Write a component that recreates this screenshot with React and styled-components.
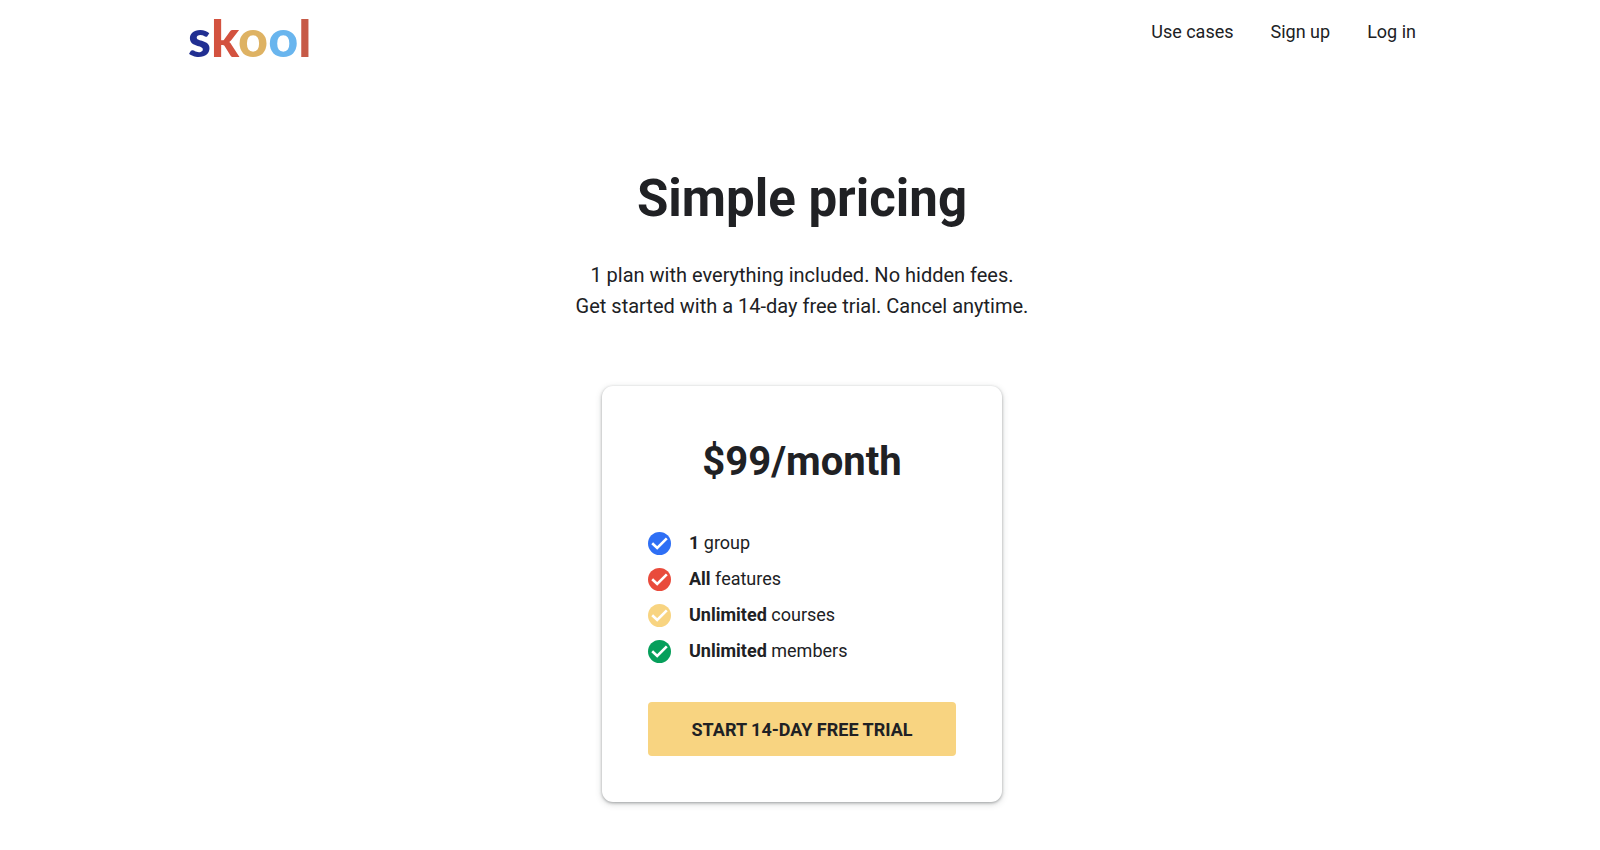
import React from "react";
import styled, { createGlobalStyle } from "styled-components";

const GlobalStyle = createGlobalStyle`
	* {
		box-sizing: border-box;
	}

	body {
		margin: 0;
		background-color: #fff;
		color: #202124;
		font-family: "Roboto", "Liberation Sans", sans-serif;
	}
`;

const Page = styled.div`
	padding: 0 20px 48px 24px;
`;

const Header = styled.header`
	display: flex;
	align-items: flex-start;
	justify-content: space-between;
	max-width: 1228px;
	margin: 0 auto;
	padding-top: 5px;
`;

const Logo = styled.a`
	font-family: "Lato", sans-serif;
	font-size: 52px;
	font-weight: 900;
	line-height: 64px;
	text-decoration: none;
`;

const Letter = styled.span`
	color: ${(props) => props.$color};
`;

const Nav = styled.nav`
	display: flex;
	gap: 37px;
	padding-top: 15px;
`;

const NavLink = styled.a`
	color: #202124;
	font-size: 18px;
	line-height: 24px;
	text-decoration: none;
`;

const Main = styled.main`
	display: flex;
	flex-direction: column;
	align-items: center;
	padding-top: 98px;
	text-align: center;
`;

const Title = styled.h1`
	margin: 0;
	font-size: 51px;
	font-weight: 700;
	line-height: 64px;
`;

const Intro = styled.p`
	margin: 29px 0 0;
	font-size: 20px;
	line-height: 31px;
`;

const Card = styled.section`
	width: 100%;
	max-width: 400px;
	margin-top: 64px;
	padding: 46px;
	border-radius: 11px;
	background-color: #fff;
	box-shadow: 0 1px 3px rgba(60, 64, 67, 0.4), 0 2px 7px rgba(60, 64, 67, 0.2);
`;

const Price = styled.h2`
	margin: 0;
	font-size: 40px;
	font-weight: 700;
	line-height: 60px;
`;

const FeatureList = styled.ul`
	display: flex;
	flex-direction: column;
	gap: 12px;
	margin: 39px 0;
	padding: 0;
	list-style: none;
`;

const Feature = styled.li`
	display: flex;
	align-items: center;
	gap: 18px;
	font-size: 18px;
	line-height: 24px;
`;

const CheckIcon = styled.svg`
	flex: none;
	width: 23px;
	height: 23px;
`;

const TrialButton = styled.button`
	width: 100%;
	height: 54px;
	border: none;
	border-radius: 4px;
	background-color: #f8d481;
	color: #202124;
	font-family: inherit;
	font-size: 18px;
	font-weight: 700;
	cursor: pointer;
`;

const letters = [
	{ char: "s", color: "#212f92" },
	{ char: "k", color: "#d3523f" },
	{ char: "o", color: "#deb263" },
	{ char: "o", color: "#69b5ee" },
	{ char: "l", color: "#c65a47" },
];

const features = [
	{ amount: "1", label: "group", color: "#2e6ff5" },
	{ amount: "All", label: "features", color: "#e94b3c" },
	{ amount: "Unlimited", label: "courses", color: "#f8d481" },
	{ amount: "Unlimited", label: "members", color: "#069f5b" },
];

function Check({ color }) {
	return (
		<CheckIcon viewBox="0 0 23 23" aria-hidden="true">
			<circle cx="11.5" cy="11.5" r="11.5" fill={color} />
			<path d="M4.2 11.3l5 4.7 9.6-9.6" fill="none" stroke="#fff" strokeWidth="2.6" />
		</CheckIcon>
	);
}

function App() {
	return (
		<Page>
			<GlobalStyle />
			<Header>
				<Logo href="#" aria-label="skool">
					{letters.map((letter, i) => (
						<Letter key={i} $color={letter.color}>
							{letter.char}
						</Letter>
					))}
				</Logo>
				<Nav>
					<NavLink href="#use-cases">Use cases</NavLink>
					<NavLink href="#signup">Sign up</NavLink>
					<NavLink href="#login">Log in</NavLink>
				</Nav>
			</Header>
			<Main>
				<Title>Simple pricing</Title>
				<Intro>
					1 plan with everything included. No hidden fees.
					<br />
					Get started with a 14-day free trial. Cancel anytime.
				</Intro>
				<Card>
					<Price>$99/month</Price>
					<FeatureList>
						{features.map((feature) => (
							<Feature key={feature.label}>
								<Check color={feature.color} />
								<span>
									<b>{feature.amount}</b> {feature.label}
								</span>
							</Feature>
						))}
					</FeatureList>
					<TrialButton type="button">START 14-DAY FREE TRIAL</TrialButton>
				</Card>
			</Main>
		</Page>
	);
}

export default App;
